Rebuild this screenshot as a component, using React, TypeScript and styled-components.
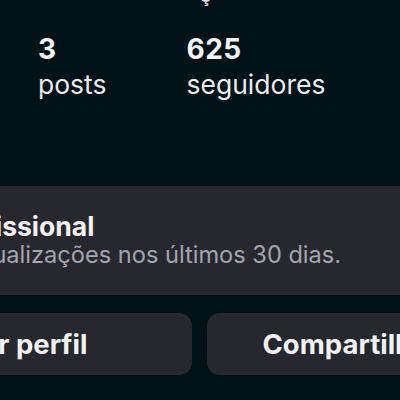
import React from "react";
import styled, { createGlobalStyle } from "styled-components";

const GlobalStyle = createGlobalStyle`
  html, body {
    margin: 0;
    padding: 0;
    background: #031216;
  }
  body {
    font-family: Inter, "Noto Sans", "Liberation Sans", sans-serif;
    color: #f2f2f4;
    -webkit-font-smoothing: antialiased;
  }
`;

const stats = [
  { value: "3", label: "posts" },
  { value: "625", label: "seguidores" },
];

const App = () => {
  return (
    <>
      <GlobalStyle />
      <StyledPage>
        <StyledNameTail>
          <span>ç</span>
        </StyledNameTail>
        <StyledStats>
          {stats.map((s) => (
            <StyledStat key={s.label}>
              <strong>{s.value}</strong>
              <span>{s.label}</span>
            </StyledStat>
          ))}
        </StyledStats>
        <StyledDashboard>
          <StyledDashboardText>
            <h4>Painel profissional</h4>
            <p>112,4 mil visualizações nos últimos 30 dias.</p>
          </StyledDashboardText>
        </StyledDashboard>
        <StyledActions>
          <StyledButton>Editar perfil</StyledButton>
          <StyledButton>Compartilhar perfil</StyledButton>
        </StyledActions>
      </StyledPage>
    </>
  );
};

export default App;

const StyledPage = styled.div`
  width: 400px;
  height: 400px;
  overflow: hidden;
  background: #031216;
`;

const StyledNameTail = styled.div`
  height: 6px;
  overflow: hidden;
  padding-left: 199px;
  span {
    display: block;
    margin-top: -17px;
    font-size: 22px;
    line-height: 22px;
    font-weight: 600;
    color: #d8d8dc;
  }
`;

const StyledStats = styled.div`
  display: flex;
  gap: 80px;
  padding: 25px 0 0 38px;
  height: 150px;
  box-sizing: border-box;
`;

const StyledStat = styled.div`
  display: flex;
  flex-direction: column;
  flex-shrink: 0;
  strong {
    font-size: 28px;
    line-height: 36px;
    font-weight: 700;
    letter-spacing: 0.5px;
    color: #f4f4f6;
  }
  span {
    font-size: 26.5px;
    line-height: 34px;
    font-weight: 400;
    color: #ececef;
  }
`;

const StyledDashboard = styled.div`
  margin-top: 30px;
  height: 109px;
  background: #27282d;
  overflow: hidden;
`;

const StyledDashboardText = styled.div`
  margin-left: -144px;
  padding-top: 24px;
  white-space: nowrap;
  h4 {
    margin: 0;
    font-size: 26.5px;
    line-height: 32px;
    font-weight: 700;
    color: #f2f2f4;
  }
  p {
    margin: -2px 0 0 4px;
    font-size: 23.6px;
    line-height: 30px;
    color: #a4a5ad;
  }
`;

const StyledActions = styled.div`
  display: grid;
  grid-template-columns: 1fr 1fr;
  gap: 15px;
  width: 747px;
  margin: 18px 0 0 -174px;
`;

const StyledButton = styled.div`
  height: 62px;
  border-radius: 13px;
  background: #27282d;
  display: flex;
  align-items: center;
  justify-content: center;
  font-size: 27.5px;
  font-weight: 700;
  color: #f2f2f4;
  white-space: nowrap;
`;
